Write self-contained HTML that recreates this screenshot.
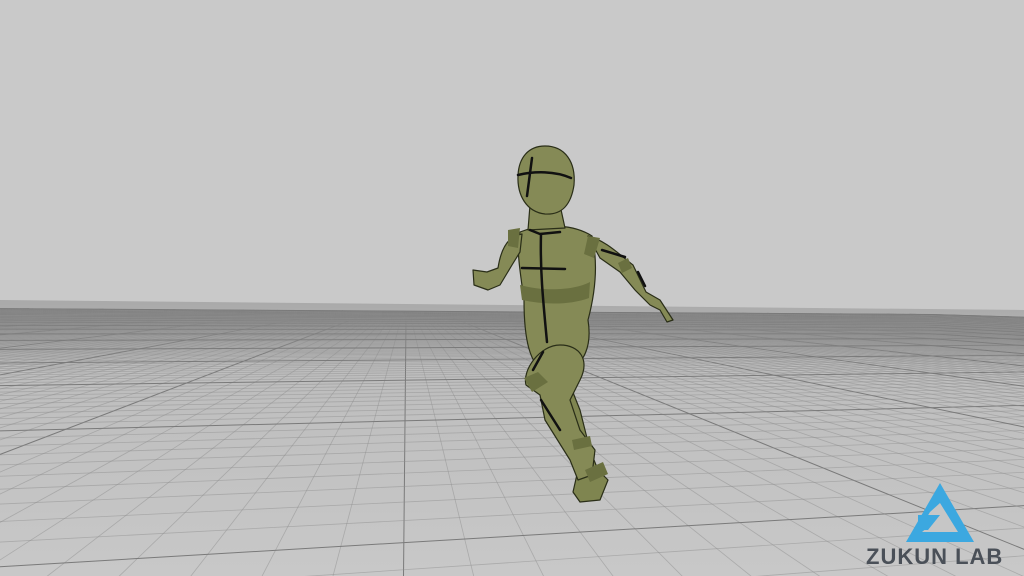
<!DOCTYPE html>
<html><head><meta charset="utf-8"><style>
html,body{margin:0;padding:0;width:1024px;height:576px;overflow:hidden;background:#c9c9c9}
svg{position:absolute;left:0;top:0}
.logo{position:absolute;left:866px;top:545px;font-family:"Liberation Sans",sans-serif;font-size:22px;letter-spacing:1px;color:#4a5058;font-weight:bold;line-height:24px}
</style></head><body>
<svg id="g" width="1024" height="576" viewBox="0 0 1024 576">
<defs><linearGradient id="fl" x1="0" y1="0" x2="0" y2="1">
<stop offset="0" stop-color="#a9a9a9"/><stop offset="0.25" stop-color="#bdbdbd"/><stop offset="1" stop-color="#c8c8c8"/></linearGradient>
<clipPath id="cp"><rect x="0" y="0" width="1024" height="576"/></clipPath></defs>
<rect x="0" y="0" width="1024" height="576" fill="#c9c9c9"/>
<polygon points="0,300 1024,310 1024,576 0,576" fill="url(#fl)"/>
<g clip-path="url(#cp)"><g transform="rotate(0.56 512 300)">
<g id="grid" stroke="#8e8e8e" stroke-width="0.8" fill="none"></g>
</g></g>
<g stroke="#2a2e18" stroke-width="1.2" stroke-linejoin="round">
<path d="M560 360 L580 410 L590 450 L598 470 L608 480 L600 500 L580 502 L573 492 L578 470 L570 440 L548 400 Z" fill="#7f8550"/>
<path d="M520 232 C545 222 575 225 592 236 C598 262 596 290 588 320 C592 345 585 365 565 372 L545 372 C530 365 524 340 524 300 C520 270 516 250 520 232 Z" fill="#858a56"/>
<path d="M560 345 C580 345 590 360 580 380 L570 400 L580 430 L595 450 L592 475 L578 480 L570 460 L545 420 L540 395 L526 385 C522 370 540 345 560 345 Z" fill="#858a56"/>
<path d="M522 234 C505 236 500 255 498 268 L487 272 L473 270 L474 285 L488 290 L500 285 L512 265 L520 252 Z" fill="#858a56"/>
<path d="M588 236 C605 240 620 255 633 265 L646 292 L660 300 L673 320 L667 322 L660 310 L650 305 L635 290 L620 272 L600 258 Z" fill="#858a56"/>
<path d="M530 205 L560 205 L565 228 L528 230 Z" fill="#858a56"/>
<path d="M545 146 C565 146 576 162 574 185 C571 205 562 215 545 214 C527 212 517 196 518 175 C519 158 528 146 545 146 Z" fill="#858a56"/>
</g>
<g fill="#6a7040" stroke="none">
<path d="M520 285 C545 292 575 290 590 282 L589 298 C570 305 545 305 522 300 Z"/>
<path d="M588 236 L600 238 L594 258 L584 254 Z"/>
<path d="M618 263 L628 258 L632 268 L622 273Z"/>
<path d="M524 378 L538 372 L548 382 L532 392Z"/>
<path d="M572 440 L590 436 L592 446 L574 450Z"/>
<path d="M585 470 L603 462 L608 474 L590 482Z"/>
<path d="M508 230 L520 228 L518 248 L508 246Z"/>
</g>
<g stroke="#111" stroke-width="2.5" fill="none" stroke-linecap="round">
<path d="M518 175 C535 171 555 171 571 178"/>
<path d="M532 158 L527 196"/>
<path d="M530 230 L540 234 L560 232"/>
<path d="M541 234 C540 270 543 300 547 342"/>
<path d="M522 268 L565 269"/>
<path d="M602 250 L625 257"/>
<path d="M638 272 L645 286"/>
<path d="M543 352 L533 370"/>
<path d="M541 400 L560 430"/>
</g>
<polygon points="940,483 974,542 906,542" fill="#3ca8e0"/>
<polygon points="940,503 958,532 922,532 934,522 924,522 930,512" fill="#c6c6c6"/>
<polygon points="918,515 940,515 928,530 918,530" fill="#3ca8e0"/>
</svg>
<div class="logo">ZUKUN LAB</div>
<script>
var g=document.getElementById('grid'),s='';
var f=600,cx=512,hy=300,h=4,th=10*Math.PI/180,c=Math.cos(th),sn=Math.sin(th),near=3;
function cam(X,Z){return [X*c-Z*sn, X*sn+Z*c];}
function seg(X1,Z1,X2,Z2,maj){
 var a=cam(X1,Z1),b=cam(X2,Z2);
 if(a[1]<near&&b[1]<near)return;
 if(a[1]<near){var t=(near-a[1])/(b[1]-a[1]);a=[a[0]+t*(b[0]-a[0]),near];}
 if(b[1]<near){var t=(near-b[1])/(a[1]-b[1]);b=[b[0]+t*(a[0]-b[0]),near];}
 var x1=cx+f*a[0]/a[1],y1=hy+f*h/a[1],x2=cx+f*b[0]/b[1],y2=hy+f*h/b[1];
 s+='<line x1="'+x1.toFixed(1)+'" y1="'+y1.toFixed(1)+'" x2="'+x2.toFixed(1)+'" y2="'+y2.toFixed(1)+'"'+(maj?' stroke="#7a7a7a" stroke-width="1"':' stroke-opacity="0.5"')+'/>';
}
var R=200;
for(var i=-R;i<=R;i++){seg(i,-R,i,R,i%10==0);seg(-R,i,R,i,i%10==0);}
g.innerHTML=s;
</script>
</body></html>
